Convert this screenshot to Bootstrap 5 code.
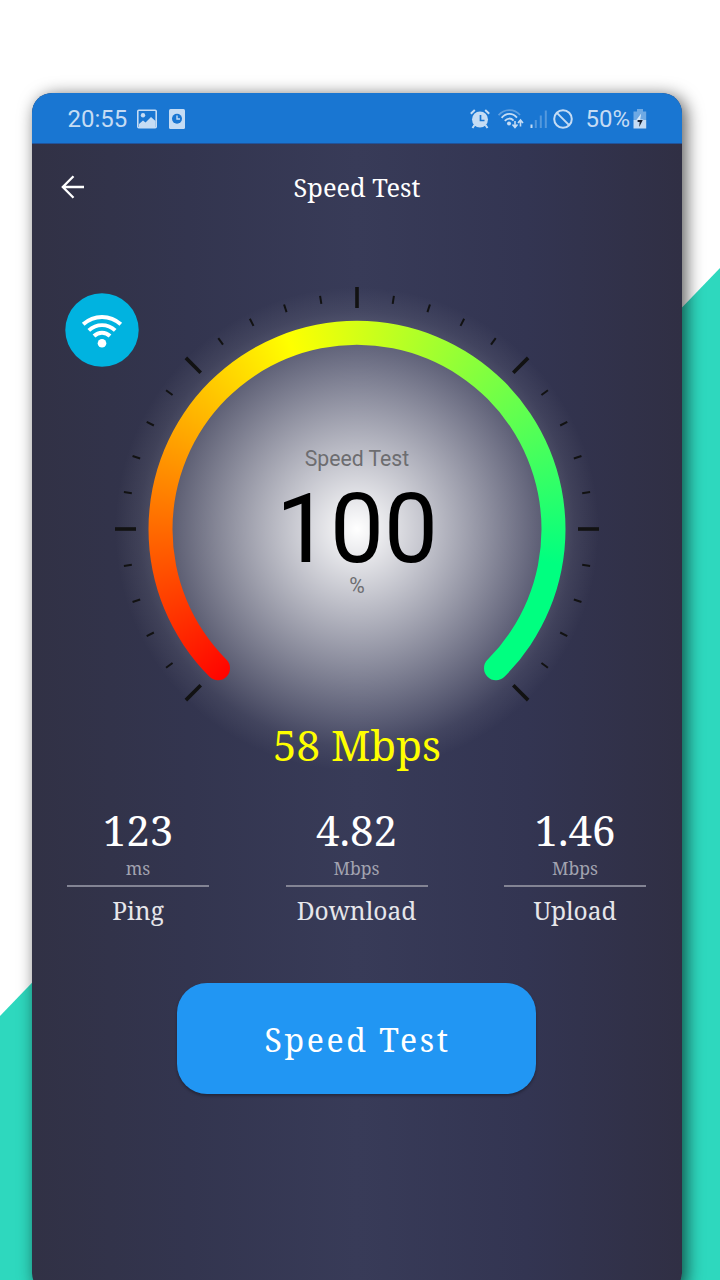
<!DOCTYPE html>
<html lang="en">
<head>
<meta charset="utf-8">
<meta name="viewport" content="width=device-width, initial-scale=1">
<title>Speed Test</title>
<link href="https://cdn.jsdelivr.net/npm/bootstrap@5.3.0/dist/css/bootstrap.min.css" rel="stylesheet">
<style>
  body { width: 720px; height: 1280px; overflow: hidden; background: #fff; font-family: Roboto, sans-serif; }
  .stage { height: 1280px; padding: 93px 38px 0 32px; }
  .wedge { position: absolute; inset: 0; background: #2ed8be; clip-path: polygon(720px 268px, 720px 1280px, 0 1280px, 0 1016px); }
  .phone { height: 1200px; width: 650px; border-radius: 20px;
    background: linear-gradient(90deg, #313145 0%, #33354f 24%, #383b58 50%, #333552 76%, #302f44 100%); }
  .phone-shadow { border-radius: 20px; height: 1200px; width: 650px; box-shadow: 4px 3px 17px rgba(0,0,0,.66); }
  .statusbar { height: 51px; background: #1976d2; color: #c5dcf4; font-size: 24px; line-height: 50px; padding: 2px 35px 0 35.5px; border-bottom: 1px solid #21539a; }
  .serif { font-family: "Noto Serif", "DejaVu Serif Condensed", "DejaVu Serif", serif; color: #fff; white-space: nowrap; }
  .topbar { height: 89px; display: grid; grid-template-columns: 60px 1fr 60px; align-items: center; }
  .title { font-size: 25.4px; margin-top: -2px; }
  .gauge { width: 500px; height: 500px; margin: 46.3px 0 0 75px; }
  .arc { position: absolute; inset: 0; background: conic-gradient(from 220deg, #f00 0deg, #ff0 120deg, #00ff80 240deg, #00ff80 300deg, #f00 301deg);
    clip-path: path("M102.57 397.43 A208.5 208.5 0 1 1 397.43 397.43 A12 12 0 0 1 380.46 380.46 A184.5 184.5 0 1 0 119.54 380.46 A12 12 0 0 1 102.57 397.43 Z"); }
  .readout { position: absolute; inset: 0; padding-top: 165.7px; text-align: center; color: #6d6d70; font-size: 21.2px; line-height: 28px; }
  .big { font-size: 96px; line-height: 86px; padding-top: 13px; color: #000; }
  .wifi { position: absolute; left: 32.5px; top: 200px; }
  .speed { font-size: 42px; line-height: 60px; color: #ff0; margin-top: -64.3px; }
  .stats { padding: 0 36px 0 35px; margin-top: 26px; }
  .stat { width: 142px; }
  .val { font-size: 42px; line-height: 58px; }
  .unit { font-size: 17.6px; line-height: 18px; color: #a2a3b0; }
  .lbl { font-size: 24.5px; line-height: 34px; color: #e6e6ea; border-top: 2px solid #838494; margin-top: 8px; padding-top: 7px; }
  .go { width: 359px; height: 111px; border-radius: 30px; background: #2196f3; border: 0; font-size: 32px; letter-spacing: 2.6px; margin: 55px 145px 0; padding: 2px 0 0 2px; box-shadow: 0 2px 3px rgba(0,0,0,.3); }
</style>
</head>
<body>
<div class="stage position-relative overflow-hidden">
  <div class="wedge"></div>
  <div class="position-relative phone-shadow">
  <main class="phone position-relative overflow-hidden">
    <div class="statusbar d-flex align-items-center">
      <span>20:55</span>
      <svg style="margin-left:9.5px" width="20" height="20" viewBox="0 0 20 20"><rect x=".8" y="1.3" width="18.4" height="17.4" rx="1" fill="none" stroke="#c5dcf4" stroke-width="1.6"/><circle cx="6" cy="6.3" r="2.2" fill="#c5dcf4"/><path d="M2 15 L6 11.5 L8.5 13.5 L14 8 L18.5 12 V18 H2Z" fill="#c5dcf4"/></svg>
      <svg style="margin-left:12px" width="16" height="20" viewBox="0 0 16 20"><rect width="16" height="20" rx="1.5" fill="#c5dcf4"/><circle cx="8" cy="9.7" r="5" fill="#1976d2"/><path d="M8 6.5 V10 H11" fill="none" stroke="#c5dcf4" stroke-width="1.4"/></svg>
      <svg class="ms-auto" width="20" height="20" viewBox="0 0 20 20" fill="none" stroke="#c5dcf4"><circle cx="10" cy="10.5" r="8" fill="#c5dcf4" stroke="none"/><path d="M10.5 6 V11.5 H14.5" stroke="#1976d2" stroke-width="1.7"/><path d="M.8 4.8 L4.8 1 M15.2 1 L19.2 4.8" stroke-width="2"/><path d="M4.5 16 L2.5 19 M15.5 16 L17.5 19" stroke-width="2"/></svg>
      <svg style="margin-left:8px" width="26" height="20" viewBox="0 0 26 20" fill="none" stroke="#c5dcf4" stroke-width="1.8"><path d="M.6 6.2 C6 -.2 16 -.8 22 6" opacity=".4"/><path d="M3.6 8.8 C8 3.6 14.5 3.4 19 8.6"/><path d="M6.8 11.8 C9.5 8.8 13 8.8 15.6 11.6"/><circle cx="11" cy="14.6" r="2" fill="#c5dcf4" stroke="none"/><path d="M17 12 V18 M14.5 15.5 L17 18.5 L19.5 15.5 M22.5 17.5 V11.5 M20 14 L22.5 11 L25 14" stroke-width="1.6"/></svg>
      <svg style="margin-left:6px" width="18" height="20" viewBox="0 0 18 20" fill="#c5dcf4"><path d="M.5 15.5 h2 V19 h-2Z"/><path opacity=".35" d="M4.8 11 h2 V19 h-2Z M9.8 6.5 h2 V19 h-2Z M14.8 1.5 h2 V19 h-2Z"/></svg>
      <svg style="margin-left:5px" width="20" height="20" viewBox="0 0 20 20" fill="none" stroke="#c5dcf4" stroke-width="2"><circle cx="10" cy="10" r="8.8"/><path d="M3.9 3.9 L16.1 16.1"/></svg>
      <span style="margin-left:12px">50%</span>
      <svg style="margin-left:3px" width="14" height="20" viewBox="0 0 14 20"><path d="M4 0 H10 V2.5 H13.2 V11 H.5 V2.5 H4Z" fill="#6ea9e4"/><path d="M.5 11 H13.2 V19.5 H.5Z" fill="#c5dcf4"/><path d="M8.2 4.5 L3 11.5 H6.4 L6 17.5 L10.5 10.5 H7.2Z" fill="#d6e8fa"/><path d="M4.6 11 H9.8 L6.2 18 L6.6 13 H4.6Z" fill="#172235"/></svg>
    </div>
    <header class="topbar">
      <svg style="margin-left:29px;margin-bottom:3px" width="24" height="24" viewBox="0 0 24 24" fill="none" stroke="#fff" stroke-width="2.3"><path d="M23 12 H2 M12.5 1.2 L1.8 12 L12.5 22.8"/></svg>
      <div class="title serif text-center">Speed Test</div>
    </header>
    <section class="gauge position-relative">
      <svg id="dial" width="500" height="500" viewBox="0 0 500 500">
        <defs><radialGradient id="glow"><stop offset="0" stop-color="#fff"/><stop offset=".8" stop-color="#fff" stop-opacity=".17"/><stop offset=".9" stop-color="#fff" stop-opacity=".065"/><stop offset="1" stop-color="#fff" stop-opacity="0"/></radialGradient></defs>
        <circle cx="250" cy="250" r="242" fill="url(#glow)"/>
      </svg>
      <div class="arc"></div>
      <div class="readout"><div>Speed Test</div><div class="big">100</div><div>%</div></div>
    </section>
    <svg class="wifi" width="74" height="74" viewBox="0 0 74 74" fill="none" stroke="#fff" stroke-width="3.9"><circle cx="37" cy="37" r="36.7" fill="#00b3e0" stroke="none"/><path d="M18.2 31.3 C29 21.5 45 21.5 55.8 31.3 M23.8 37.4 C31.5 30.3 42.5 30.3 50.2 37.4 M29 43 C33.5 38.6 40.5 38.6 45 43"/><circle cx="37" cy="50.3" r="4.3" fill="#fff" stroke="none"/></svg>
    <div class="speed serif text-center position-relative">58 Mbps</div>
    <section class="stats d-flex justify-content-between serif">
      <div class="stat text-center"><div class="val">123</div><div class="unit">ms</div><div class="lbl">Ping</div></div>
      <div class="stat text-center"><div class="val">4.82</div><div class="unit">Mbps</div><div class="lbl">Download</div></div>
      <div class="stat text-center"><div class="val">1.46</div><div class="unit">Mbps</div><div class="lbl">Upload</div></div>
    </section>
    <button class="btn go serif">Speed Test</button>
  </main>
  </div>
</div>
<script src="https://cdn.jsdelivr.net/npm/bootstrap@5.3.0/dist/js/bootstrap.bundle.min.js"></script>
<script>
  const dial = document.getElementById('dial');
  for (let a = -135; a <= 135; a += 9) {
    const major = a % 45 === 0;
    const t = document.createElementNS('http://www.w3.org/2000/svg', 'line');
    t.setAttribute('x1', 250); t.setAttribute('x2', 250);
    t.setAttribute('y1', major ? 8 : 14); t.setAttribute('y2', major ? 29 : 22);
    t.setAttribute('stroke', '#121212'); t.setAttribute('stroke-width', major ? 3.6 : 2);
    t.setAttribute('transform', `rotate(${a} 250 250)`);
    dial.appendChild(t);
  }
</script>
</body>
</html>
